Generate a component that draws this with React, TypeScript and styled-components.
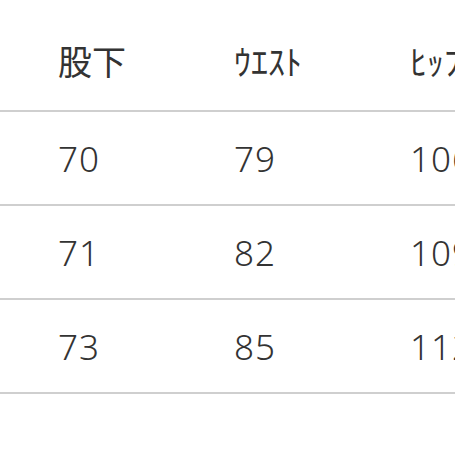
import React from 'react';
import styled, { createGlobalStyle } from 'styled-components';

const GlobalStyle = createGlobalStyle`
  html, body {
    margin: 0;
    padding: 0;
    background: #ffffff;
    overflow: hidden;
  }
`;

const headers = ['股下', 'ｳｴｽﾄ', 'ﾋｯﾌﾟ', '股上'];

const rows = [
  ['70', '79', '106', '30'],
  ['71', '82', '109', '31'],
  ['73', '85', '112', '32'],
];

export default function App() {
  return (
    <>
      <GlobalStyle />
      <Table>
        <HeadRow>
          {headers.map((h) => (
            <HeadCell key={h}>{h}</HeadCell>
          ))}
        </HeadRow>
        {rows.map((row, i) => (
          <Row key={i}>
            {row.map((v, j) => (
              <Cell key={j}>{v}</Cell>
            ))}
          </Row>
        ))}
      </Table>
    </>
  );
}

const Table = styled.div`
  width: 704px;
  display: flex;
  flex-direction: column;
  color: #333333;
`;

const HeadRow = styled.div`
  display: grid;
  grid-template-columns: repeat(4, 176px);
  height: 110px;
  border-bottom: 2px solid #cfcfcf;
`;

const Row = styled.div`
  display: grid;
  grid-template-columns: repeat(4, 176px);
  height: 92px;
  border-bottom: 2px solid #cfcfcf;
`;

const HeadCell = styled.div`
  display: flex;
  align-items: center;
  padding: 12px 0 0 58px;
  font-family: 'Noto Sans CJK JP', sans-serif;
  font-size: 34px;
  line-height: 1;
  white-space: nowrap;
`;

const Cell = styled.div`
  display: flex;
  align-items: center;
  padding-left: 58px;
  font-family: 'Noto Sans', 'Open Sans', sans-serif;
  font-size: 35px;
  font-weight: 300;
  letter-spacing: 1px;
  line-height: 1;
  white-space: nowrap;
`;
